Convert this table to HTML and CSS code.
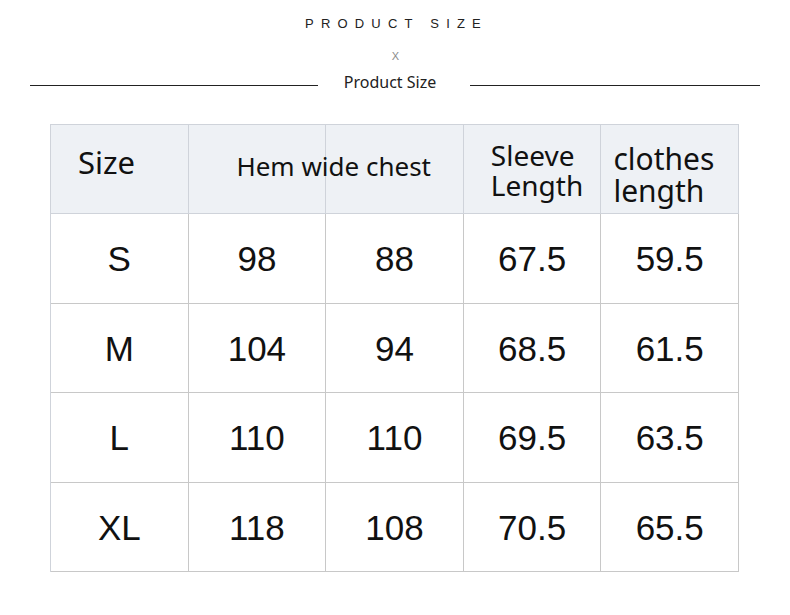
FILE: index.html
```html
<!DOCTYPE html>
<html>
<head>
<meta charset="utf-8">
<link rel="stylesheet" href="styles.css">
</head>
<body>
<div class="page">
  <div class="kicker">PRODUCT SIZE</div>
  <div class="cross">X</div>
  <div class="subtitle-row">
    <span class="rule"></span>
    <span class="subtitle">Product Size</span>
    <span class="rule rule-right"></span>
  </div>
  <div class="table">
    <div class="cell head head-size">Size</div>
    <div class="cell head head-hem">Hem wide chest</div>
    <div class="cell head head-sleeve"><span class="line">Sleeve</span><span class="line">Length</span></div>
    <div class="cell head head-clothes"><span class="line">clothes</span><span class="line">length</span></div>

    <div class="cell">S</div><div class="cell">98</div><div class="cell">88</div><div class="cell">67.5</div><div class="cell">59.5</div>
    <div class="cell">M</div><div class="cell">104</div><div class="cell">94</div><div class="cell">68.5</div><div class="cell">61.5</div>
    <div class="cell">L</div><div class="cell">110</div><div class="cell">110</div><div class="cell">69.5</div><div class="cell">63.5</div>
    <div class="cell">XL</div><div class="cell">118</div><div class="cell">108</div><div class="cell">70.5</div><div class="cell">65.5</div>
  </div>
</div>
</body>
</html>
```

FILE: styles.css
```css
html, body {
  margin: 0;
  padding: 0;
  background: #ffffff;
}

.page {
  width: 790px;
  height: 615px;
  overflow: hidden;
  font-family: "Liberation Sans", Arial, sans-serif;
  color: #111;
}

.kicker {
  margin: 16px 0 0 0;
  text-align: center;
  font-size: 13px;
  line-height: 15px;
  letter-spacing: 7.2px;
  color: #222;
  padding-left: 3px;
}

.cross {
  margin-top: 19px;
  text-align: center;
  font-size: 11px;
  line-height: 13px;
  color: #8a8a8a;
  padding-left: 1px;
}

.subtitle-row {
  margin-top: 9px;
  display: flex;
  align-items: center;
  padding-left: 30px;
  height: 20px;
}

.rule {
  width: 288px;
  height: 1px;
  background: #222;
  margin-top: 7px;
}

.rule-right {
  width: 290px;
}

.subtitle {
  width: 152px;
  text-align: center;
  font-family: "Noto Sans", sans-serif;
  font-size: 16px;
  color: #222;
  padding-right: 8px;
  box-sizing: border-box;
}

.table {
  margin: 32px 0 0 50px;
  width: 689px;
  display: grid;
  grid-template-columns: repeat(5, 1fr);
  grid-template-rows: 89px repeat(4, 89.5px);
  border-top: 1px solid #cfd3da;
  border-left: 1px solid #cfd3da;
  box-sizing: border-box;
}

.cell {
  border-right: 1px solid #c8c8c8;
  border-bottom: 1px solid #c8c8c8;
  display: flex;
  align-items: center;
  justify-content: center;
  font-size: 35px;
  padding-top: 2px;
  color: #111;
}

.head {
  background: #eef1f5;
  border-color: #cfd3da;
  font-family: "Noto Sans", sans-serif;
  color: #111;
  justify-content: flex-start;
  padding-top: 0;
}

.head-size {
  font-size: 31px;
  padding-left: 27px;
  padding-bottom: 14px;
}

.head-hem {
  grid-column: span 2;
  justify-content: center;
  font-size: 26px;
  padding-left: 16px;
  padding-bottom: 6px;
  background: linear-gradient(to right, transparent calc(50% - 1px), #cfd3da calc(50% - 1px), #cfd3da 50%, transparent 50%), #eef1f5;
}

.head-sleeve,
.head-clothes {
  flex-direction: column;
  align-items: flex-start;
  justify-content: center;
}

.line {
  display: block;
}

.head-sleeve {
  font-size: 28px;
  line-height: 30px;
  padding-left: 27px;
  padding-top: 2px;
}

.head-clothes {
  font-size: 30px;
  line-height: 32px;
  padding-left: 12px;
  padding-top: 12px;
}
```
